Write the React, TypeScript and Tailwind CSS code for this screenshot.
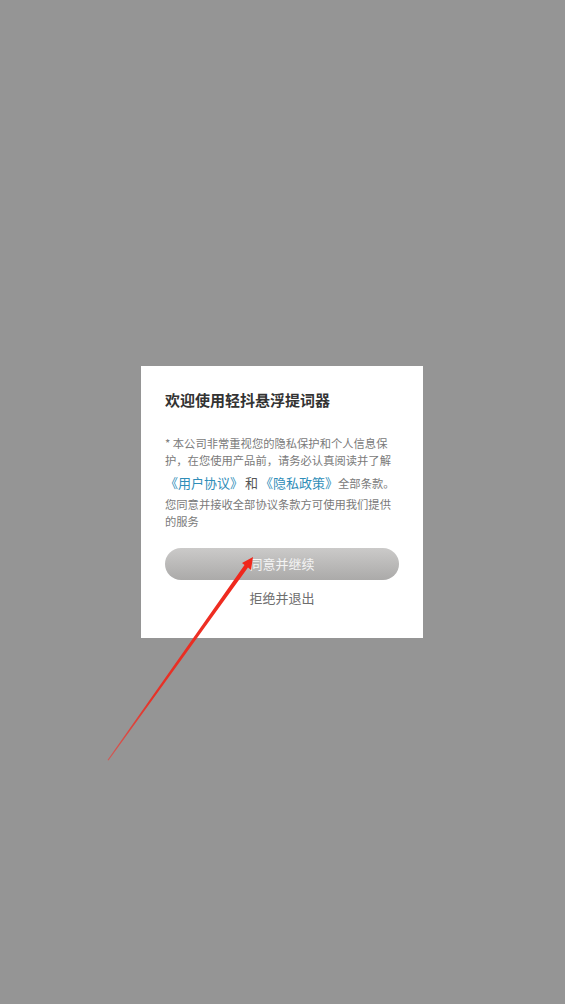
const font = { fontFamily: '"Noto Sans CJK SC", "Noto Sans", sans-serif' };

const Arrow = () => (
  <svg
    className="pointer-events-none absolute left-0 top-0"
    width="565"
    height="1004"
    viewBox="0 0 565 1004"
  >
    <defs>
      <linearGradient id="arrowFade" x1="108" y1="760" x2="253" y2="557" gradientUnits="userSpaceOnUse">
        <stop offset="0" stopColor="#e8403a" stopOpacity="0.7" />
        <stop offset="0.3" stopColor="#ea2d22" stopOpacity="0.95" />
        <stop offset="1" stopColor="#f0261b" />
      </linearGradient>
    </defs>
    <polygon
      points="107.5,760 244.5,565 242,563 253,557 251,570 248,567.5 108.5,760.5"
      fill="url(#arrowFade)"
    />
  </svg>
);

export default function App() {
  return (
    <div className="relative h-[1004px] w-[565px] overflow-hidden bg-[#959595]" style={font}>
      <div className="flex h-full items-start justify-center pt-[366px]">
        <div className="ml-[-1px] w-[282px] bg-white px-[24px] pb-[30px] pt-[24px]">
          <h1 className="text-[15px] font-bold leading-[20px] text-[#333333]">
            欢迎使用轻抖悬浮提词器
          </h1>
          <div className="mt-[25px] whitespace-nowrap text-[11.3px] leading-[17px] text-[#7a7a7a]">
            <p>* 本公司非常重视您的隐私保护和个人信息保</p>
            <p>护，在您使用产品前，请务必认真阅读并了解</p>
            <p className="mt-[3px] leading-[22px]">
              <span className="text-[13px] text-[#2f8db8]">《用户协议》</span>
              <span className="mx-[2px] text-[13px] text-[#555555]">和</span>
              <span className="text-[13px] text-[#2f8db8]">《隐私政策》</span>
              <span>全部条款。</span>
            </p>
            <p className="mt-[2px]">您同意并接收全部协议条款方可使用我们提供</p>
            <p>的服务</p>
          </div>
          <button className="mt-[18px] flex h-[32px] w-full items-center justify-center rounded-full bg-gradient-to-b from-[#cbcac9] to-[#abaaa9] text-[13px] text-[#f4f4f4]">
            同意并继续
          </button>
          <div className="mt-[8px] text-center text-[13px] leading-[20px] text-[#6e6e6e]">
            拒绝并退出
          </div>
        </div>
      </div>
      <Arrow />
    </div>
  );
}
